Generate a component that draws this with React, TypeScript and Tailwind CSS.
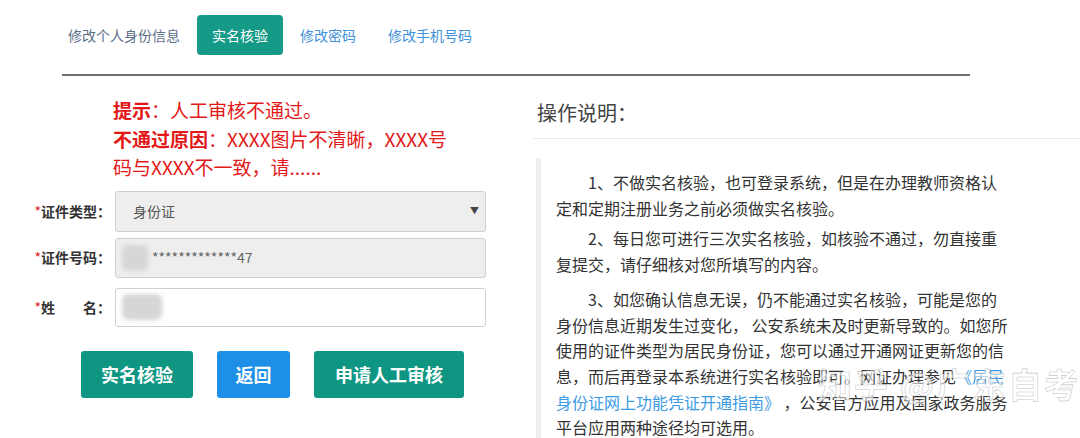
import { ReactNode } from 'react';

const font = '[font-family:"Noto_Sans_CJK_SC","Noto_Sans",sans-serif]';

const tabs = [
  { label: '修改个人身份信息', tone: 'text-[#5b7088]' },
  { label: '实名核验', active: true },
  { label: '修改密码', tone: 'text-[#3f92d8]' },
  { label: '修改手机号码', tone: 'text-[#3f92d8]' },
];

function FormRow({ label, children, className = '' }: { label: ReactNode; children: ReactNode; className?: string }) {
  return (
    <div className={`flex items-center ${className}`}>
      <label className="w-[115px] shrink-0 pr-[4px] text-right text-[14px] font-bold text-[#333]">
        <span className="text-[#e02020] font-normal">*</span>
        {label}
      </label>
      {children}
    </div>
  );
}

function Blur({ w }: { w: string }) {
  return <div className={`h-[26px] ${w} rounded-[6px] bg-[#d6d6d6] blur-[2px]`} />;
}

export default function App() {
  return (
    <div className={`relative w-[1080px] h-[438px] overflow-hidden bg-white ${font}`}>
      <ul className="flex gap-[2px] pl-[53px] pt-[15px]">
        {tabs.map(t => (
          <li
            key={t.label}
            className={
              t.active
                ? 'h-[40px] px-[15px] flex items-center rounded-[4px] bg-[#159a88] text-white text-[14px]'
                : `h-[40px] px-[15px] flex items-center text-[14px] ${t.tone}`
            }
          >
            {t.label}
          </li>
        ))}
      </ul>
      <div className="ml-[62px] mt-[19px] w-[908px] h-[2px] bg-[#707070]" />

      <div className="flex">
        <div className="w-[533px] shrink-0">
          <div className="ml-[113px] mt-[20px] w-[345px] text-[19px] leading-[28.5px] text-[#e31818]">
            <p>
              <b>提示</b>：人工审核不通过。
            </p>
            <p>
              <b>不通过原因</b>：XXXX图片不清晰，XXXX号码与XXXX不一致，请......
            </p>
          </div>

          <div className="mt-[9px] flex flex-col gap-[6px]">
            <FormRow label="证件类型：">
              <div className="w-[371px] h-[41px] flex items-center justify-between rounded-[3px] border border-[#cfcfcf] bg-[#eeeeee] pl-[17px] pr-[6px] text-[14px] text-[#555]">
                <span>身份证</span>
                <span className="text-[9px] text-[#444]">▼</span>
              </div>
            </FormRow>
            <FormRow label="证件号码：">
              <div className="w-[371px] h-[40px] flex items-center gap-[4px] rounded-[3px] border border-[#cfcfcf] bg-[#eeeeee] pl-[6px] text-[14px] text-[#666]">
                <Blur w="w-[26px]" />
                <span>*************47</span>
              </div>
            </FormRow>
            <FormRow
              className="mt-[4px]"
              label={
                <>
                  姓<span className="inline-block w-[28px]" />名：
                </>
              }
            >
              <div className="w-[371px] h-[39px] flex items-center rounded-[3px] border border-[#cfcfcf] bg-white pl-[6px]">
                <Blur w="w-[40px]" />
              </div>
            </FormRow>
          </div>

          <div className="mt-[24px] ml-[81px] flex gap-[24px] text-[18px] font-bold text-white">
            <button className="w-[112px] h-[47px] rounded-[3px] bg-[#0f9683]">实名核验</button>
            <button className="w-[73px] h-[47px] rounded-[3px] bg-[#1e8fe6]">返回</button>
            <button className="w-[150px] h-[47px] rounded-[3px] bg-[#0f9683]">申请人工审核</button>
          </div>
        </div>

        <div className="flex-1">
          <h2 className="mt-[22px] pl-[4px] text-[20px] leading-[30px] text-[#444]">操作说明：</h2>
          <div className="mt-[10px] h-[1px] bg-[#ebebeb]" />
          <div className="mt-[19px] ml-[3px] border-l-[5px] border-[#eeeeee] pl-[15px] pt-[12px] text-[16px] leading-[25.7px] text-[#333]">
            <div className="w-[454px] flex flex-col gap-[5px]">
              <p className="indent-[2em]">
                1、不做实名核验，也可登录系统，但是在办理教师资格认定和定期注册业务之前必须做实名核验。
              </p>
              <p className="indent-[2em]">
                2、每日您可进行三次实名核验，如核验不通过，勿直接重复提交，请仔细核对您所填写的内容。
              </p>
              <p className="indent-[2em] mt-[4px]">
                3、如您确认信息无误，仍不能通过实名核验，可能是您的身份信息近期发生过变化， 公安系统未及时更新导致的。如您所使用的证件类型为居民身份证，您可以通过开通网证更新您的信息，而后再登录本系统进行实名核验即可。网证办理参见
                <a className="text-[#3d9be3]">《居民身份证网上功能凭证开通指南》</a> ，公安官方应用及国家政务服务平台应用两种途径均可选用。
              </p>
            </div>
          </div>
        </div>
      </div>

      <span className="absolute left-[818px] top-[358px] text-[34px] font-bold tracking-[2px] text-white/60 [-webkit-text-stroke:0.6px_rgba(120,120,120,0.45)] pointer-events-none">
        知乎 @广东自考
      </span>
    </div>
  );
}
